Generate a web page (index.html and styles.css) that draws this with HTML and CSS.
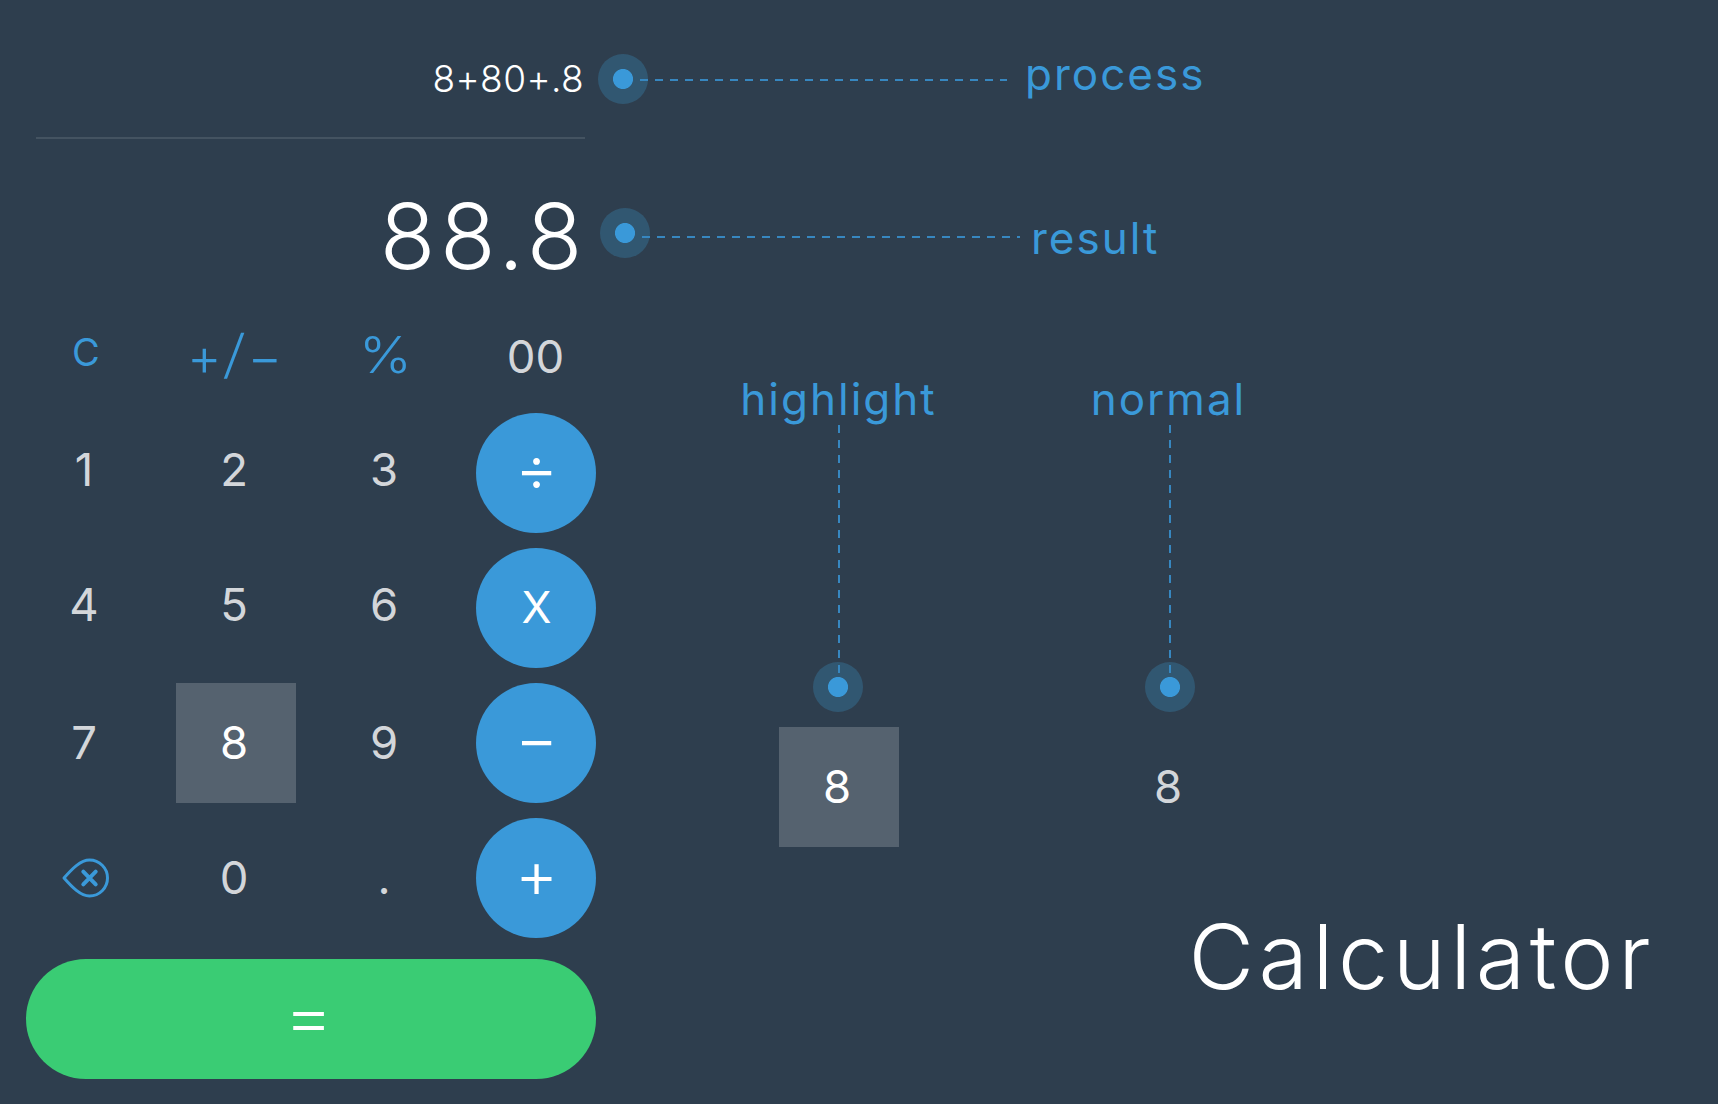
FILE: index.html
```html
<!DOCTYPE html>
<html lang="en">
<head>
<meta charset="utf-8">
<title>Calculator</title>
<link rel="stylesheet" href="styles.css">
</head>
<body>
<main class="board">
  <section class="calculator">
    <div class="process">8+80+.8</div>
    <div class="result">88.8</div>
    <div class="functions">
      <span class="key fn clear">C</span>
      <span class="key fn sign">+<span class="slash">/</span>−</span>
      <span class="key fn percent"><span class="wide">%</span></span>
      <span class="key zeros">00</span>
    </div>
    <div class="keypad">
      <span class="key high">1</span>
      <span class="key high">2</span>
      <span class="key high">3</span>
      <span class="key op">÷</span>
      <span class="key high">4</span>
      <span class="key high">5</span>
      <span class="key high">6</span>
      <span class="key op times">X</span>
      <span class="key">7</span>
      <span class="key active">8</span>
      <span class="key">9</span>
      <span class="key op">−</span>
      <span class="key erase">
        <svg class="erase-icon" viewBox="0 0 50 42" width="50" height="42">
          <path class="outline" d="M4 21C12 12 20.5 3 29.5 3A18 18 0 0 1 29.5 39C20.5 39 12 30 4 21Z"/>
          <path class="cross" d="M23.3 14.7L35.7 27.3M35.7 14.7L23.3 27.3"/>
        </svg>
      </span>
      <span class="key">0</span>
      <span class="key">.</span>
      <span class="key op plus">+</span>
    </div>
    <div class="equals"><span class="equals-sign">=</span></div>
  </section>
  <section class="notes">
    <div class="note note-process">
      <i class="dot"></i><i class="hline"></i><span class="label">process</span>
    </div>
    <div class="note note-result">
      <i class="dot"></i><i class="hline"></i><span class="label">result</span>
    </div>
    <div class="states">
      <div class="state">
        <span class="label">highlight</span><i class="vline"></i><i class="dot"></i>
        <span class="key active">8</span>
      </div>
      <div class="state state-normal">
        <span class="label">normal</span><i class="vline"></i><i class="dot"></i>
        <span class="key">8</span>
      </div>
    </div>
    <h1 class="title">Calculator</h1>
  </section>
</main>
</body>
</html>
```
FILE: styles.css
```css
* { box-sizing: border-box; }
body {
  margin: 0;
  background: #2e3e4e;
  color: #fff;
  font-family: Inter, "Liberation Sans", sans-serif;
  font-weight: 300;
}
.board {
  display: grid;
  grid-template-columns: 598px 1fr;
  width: 1718px;
  height: 1104px;
  overflow: hidden;
}
.calculator { padding-left: 25.5px; }
.process, .result {
  display: flex;
  justify-content: flex-end;
  align-items: center;
  width: 549px;
  margin-left: 10.5px;
}
.process {
  height: 139px;
  padding: 20px 1px 0 0;
  border-bottom: 2px solid #445361;
  font-size: 37px;
  letter-spacing: 0.4px;
}
.result {
  width: 551px;
  height: 194px;
  margin-bottom: -1px;
  font-size: 91px;
  letter-spacing: 4.7px;
}
.functions, .keypad {
  display: grid;
  grid-template-columns: repeat(4, 120px);
  gap: 15px 30px;
}
.functions { height: 80.5px; }
.functions .key { height: 48px; }
.keypad { grid-auto-rows: 120px; }
.key {
  display: flex;
  align-items: center;
  justify-content: center;
  width: 120px;
  height: 120px;
  padding-right: 3px;
  color: #d3d6da;
  font-size: 45.5px;
  font-weight: 400;
}
.high { padding-bottom: 6px; }
.fn { color: #3a99d9; font-weight: 300; line-height: 1; }
.clear { padding: 0 0 9px 1px; font-size: 38px; font-weight: 400; }
.sign { padding: 3px 0 0 2px; font-size: 53px; letter-spacing: 3.7px; }
.slash { transform: translateY(-3px) skewX(-6deg); }
.percent { padding: 0 1px 2px 0; font-size: 50px; }
.wide { transform: scaleX(1.13); }
.zeros { padding-right: 0; }
.active { background: #55626f; color: #fff; }
.op {
  padding: 0 0 10px 2px;
  border-radius: 50%;
  background: #3a99d9;
  color: #fff;
  font-size: 66px;
  font-weight: 300;
}
.plus { padding-bottom: 8px; }
.times { padding-bottom: 2px; font-size: 44px; font-weight: 400; }
.erase { padding: 0 2px 0 0; }
.erase-icon { fill: none; stroke: #3a99d9; stroke-width: 3; stroke-linejoin: round; }
.cross { stroke-width: 4; stroke-linecap: round; }
.equals {
  display: flex;
  align-items: center;
  justify-content: center;
  width: 570px;
  height: 120px;
  margin-top: 21px;
  padding: 0 4px 6px 0;
  border-radius: 60px;
  background: #3acc74;
  font-size: 66px;
}
.equals-sign { transform: scaleX(1.14); }
.notes { color: #3a99d9; }
.note { display: flex; height: 50px; }
.note-process { margin-top: 54px; }
.note-result { margin: 104px 0 0 2px; }
.dot {
  flex: none;
  width: 50px;
  height: 50px;
  border-radius: 50%;
  background: radial-gradient(circle, #3a99d9 9.6px, #315771 10.4px);
}
.hline {
  width: 367px;
  height: 2px;
  margin: 25px 0 0 -8px;
  background: repeating-linear-gradient(90deg, #3787c0 0 8px, transparent 8px 15px);
}
.label {
  font-size: 44px;
  font-weight: 400;
  line-height: 52px;
  letter-spacing: 2px;
}
.note-process .label { margin: -6px 0 0 18px; }
.note-result .hline { width: 378px; margin-top: 28px; }
.note-result .label { margin: 4px 0 0 11px; }
.states { display: flex; gap: 211px; margin: 115px 0 0 180.5px; }
.state { display: flex; flex-direction: column; align-items: center; width: 120px; }
.vline {
  width: 2px;
  height: 248px;
  margin-bottom: -11px;
  background: repeating-linear-gradient(180deg, #3787c0 0 8px, transparent 8px 15px);
  z-index: 1;
}
.state .dot { margin-right: 1px; }
.state .key { margin-top: 15px; padding-bottom: 2px; }
.state-normal .label { margin-right: 2px; }
.state-normal .dot { margin-right: 0; }
.title {
  margin: 55px 63px 0 0;
  color: #fff;
  font-size: 90px;
  font-weight: 300;
  letter-spacing: 4.5px;
  text-align: right;
}
```
